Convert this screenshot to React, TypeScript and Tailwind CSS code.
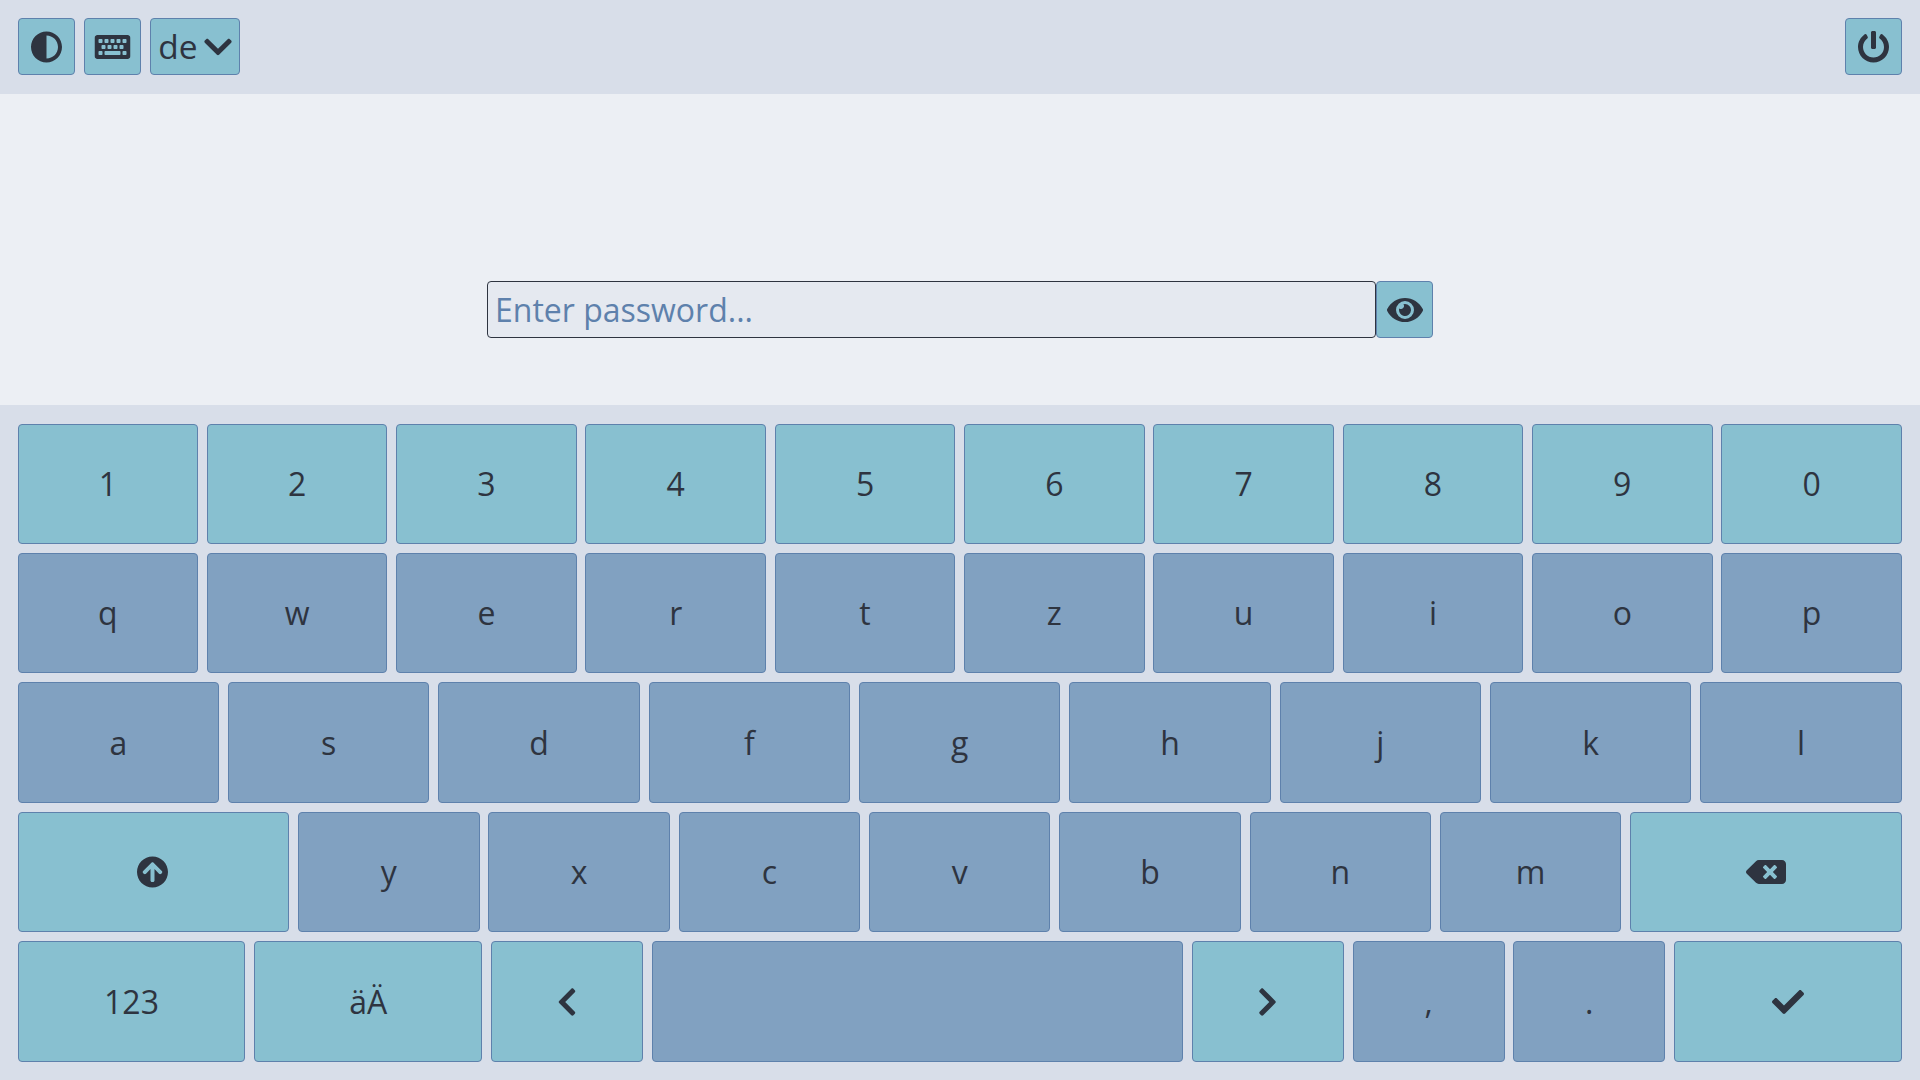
import React from "react";
import {
  FaAdjust,
  FaKeyboard,
  FaChevronDown,
  FaPowerOff,
  FaEye,
  FaArrowCircleUp,
  FaBackspace,
  FaChevronLeft,
  FaChevronRight,
  FaCheck,
} from "react-icons/fa";

const base =
  "flex items-center justify-center rounded-[4px] border border-[#5e81ac] text-[#2e3440] text-[32px] leading-none min-w-0";
const accent = "bg-[#88c0d0]";
const letter = "bg-[#81a1c1]";
const nudge = "translate-x-[-0.5px]";

function Key({
  children,
  kind = "letter",
  extra = "",
}: {
  children?: React.ReactNode;
  kind?: "letter" | "accent";
  extra?: string;
}) {
  return (
    <button className={`${base} ${kind === "accent" ? accent : letter} ${extra}`}>
      {children}
    </button>
  );
}

const low = "pt-[1px]";

export default function App() {
  return (
    <div className="w-[1920px] h-[1080px] flex flex-col bg-[#eceff4] overflow-hidden font-['Open_Sans',sans-serif]">
      <header className="h-[94px] shrink-0 bg-[#d8dee9] flex items-start justify-between p-[18px]">
        <div className="flex gap-[9px]">
          <button className={`${base} ${accent} w-[57px] h-[57px]`}>
            <FaAdjust className={nudge} />
          </button>
          <button className={`${base} ${accent} w-[57px] h-[57px]`}>
            <FaKeyboard className={`w-[36px] h-[32px] ${nudge}`} />
          </button>
          <button className={`${base} ${accent} w-[90px] h-[57px] gap-[6px]`}>
            <span className="text-[33.5px]">de</span>
            <FaChevronDown className="w-[28px] h-[32px]" />
          </button>
        </div>
        <button className={`${base} ${accent} w-[57px] h-[57px]`}>
          <FaPowerOff className={nudge} />
        </button>
      </header>

      <main className="flex-1 flex items-end justify-center pb-[67px]">
        <div className="flex w-[946px] h-[57px]">
          <input
            type="password"
            placeholder="Enter password..."
            className="flex-1 min-w-0 h-full rounded-[4px] border border-[#2e3440] bg-[#e5e9f0] px-[7px] text-[32px] text-[#2e3440] placeholder:text-[#5e81ac] outline-none"
          />
          <button className={`${base} ${accent} w-[57px] h-full`}>
            <FaEye className="w-[36px] h-[32px]" />
          </button>
        </div>
      </main>

      <section className="h-[675px] shrink-0 bg-[#d8dee9] flex flex-col gap-[8.8px] pl-[17.6px] pr-[18.2px] pt-[18.6px] pb-[18.2px]">
        <div className="flex-1 min-h-0 grid gap-[8.8px] grid-cols-10">
          {["1", "2", "3", "4", "5", "6", "7", "8", "9", "0"].map((k) => (
            <Key key={k} kind="accent">
              {k}
            </Key>
          ))}
        </div>
        <div className="flex-1 min-h-0 grid gap-[8.8px] grid-cols-10">
          {["q", "w", "e", "r", "t", "z", "u", "i", "o", "p"].map((k) => (
            <Key key={k}>{k}</Key>
          ))}
        </div>
        <div className="flex-1 min-h-0 grid gap-[8.8px] grid-cols-9">
          {["a", "s", "d", "f", "g", "h", "j", "k", "l"].map((k) => (
            <Key key={k}>{k}</Key>
          ))}
        </div>
        <div className="flex-1 min-h-0 grid gap-[8.8px] grid-cols-[1.497fr_repeat(7,1fr)_1.497fr]">
          <Key kind="accent">
            <FaArrowCircleUp className={nudge} />
          </Key>
          {["y", "x", "c", "v", "b", "n", "m"].map((k) => (
            <Key key={k}>{k}</Key>
          ))}
          <Key kind="accent">
            <FaBackspace className="w-[40px] h-[32px]" />
          </Key>
        </div>
        <div className="flex-[1.0033_1_0%] min-h-0 grid gap-[8.8px] grid-cols-[1.5fr_1.5fr_1fr_3.5fr_1fr_1fr_1fr_1.5fr]">
          <Key kind="accent" extra={low}>123</Key>
          <Key kind="accent" extra={low}>äÄ</Key>
          <Key kind="accent" extra={low}>
            <FaChevronLeft />
          </Key>
          <Key />
          <Key kind="accent" extra={low}>
            <FaChevronRight className={nudge} />
          </Key>
          <Key extra={low}>,</Key>
          <Key extra={low}>.</Key>
          <Key kind="accent" extra={low}>
            <FaCheck />
          </Key>
        </div>
      </section>
    </div>
  );
}
